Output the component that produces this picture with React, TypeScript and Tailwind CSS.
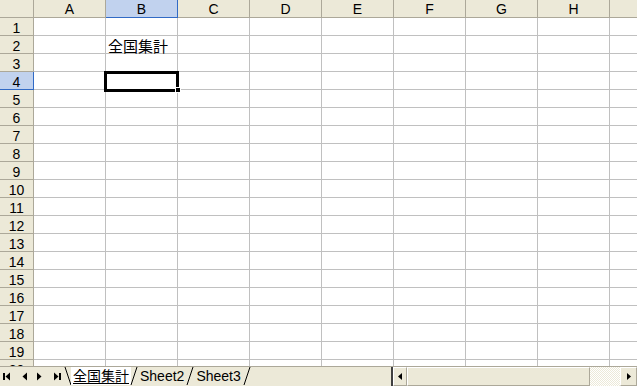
import React from "react";

const cols = ["A", "B", "C", "D", "E", "F", "G", "H", "I"];
const rows = Array.from({ length: 20 }, (_, i) => i + 1);

const font = { fontFamily: '"Liberation Sans", "Noto Sans CJK JP", sans-serif' };

const Tri = ({ dir, bar }: { dir: "l" | "r"; bar?: boolean }) => (
  <svg width="9" height="9" viewBox="0 0 9 9" className="block shrink-0">
    {dir === "l" ? (
      <>
        {bar && <rect x="1" y="1" width="2" height="7" fill="#000" />}
        <polygon points="8,0.5 8,8.5 3.5,4.5" fill="#000" />
      </>
    ) : (
      <>
        <polygon points="1,0.5 1,8.5 5.5,4.5" fill="#000" />
        {bar && <rect x="6" y="1" width="2" height="7" fill="#000" />}
      </>
    )}
  </svg>
);

const Slant = ({ back }: { back?: boolean }) => (
  <svg width="8" height="18" viewBox="0 0 8 18" className="block shrink-0">
    {back ? (
      <line x1="1" y1="0" x2="7" y2="18" stroke="#000" strokeWidth="1" />
    ) : (
      <line x1="7" y1="0" x2="1" y2="18" stroke="#000" strokeWidth="1" />
    )}
  </svg>
);

const App = () => {
  return (
    <div className="w-[637px] h-[386px] overflow-hidden bg-white flex flex-col" style={font}>
      <div className="relative h-[366px] overflow-hidden shrink-0">
        {/* header row */}
        <div className="flex h-[18px]">
          <div className="w-[34px] shrink-0 h-[18px] bg-[#ece9d8] border-r border-b border-[#aca899]" />
          {cols.map((c) => (
            <div
              key={c}
              className={
                c === "B"
                  ? "w-[72px] shrink-0 h-[18px] pt-[1px] bg-[#c1d2ee] border-r border-r-[#316ac5] border-b border-b-[#316ac5] flex items-center justify-center text-[14px] text-black"
                  : "w-[72px] shrink-0 h-[18px] pt-[1px] bg-[#ece9d8] border-r border-b border-[#aca899] flex items-center justify-center text-[14px] text-black"
              }
            >
              {c}
            </div>
          ))}
        </div>
        {rows.map((r) => (
          <div key={r} className="flex h-[18px]">
            <div
              className={
                r === 4
                  ? "w-[34px] shrink-0 h-[18px] pt-[3px] bg-[#c1d2ee] border-r border-r-[#316ac5] border-b border-b-[#316ac5] flex items-center justify-center text-[14px]"
                  : "w-[34px] shrink-0 h-[18px] pt-[3px] bg-[#ece9d8] border-r border-b border-[#aca899] flex items-center justify-center text-[14px]"
              }
            >
              {r}
            </div>
            {cols.map((c) => (
              <div
                key={c}
                className="w-[72px] shrink-0 h-[18px] pt-[3px] border-r border-b border-[#c0c0c0] flex items-center pl-[2px] text-[15px] leading-none whitespace-nowrap"
              >
                {r === 2 && c === "B" ? "全国集計" : ""}
              </div>
            ))}
          </div>
        ))}
        {/* active cell B4 */}
        <div className="absolute left-[104px] top-[71px] w-[75px] h-[21px] border-[3px] border-black" />
        <div className="absolute left-[175px] top-[87px] w-[6px] h-[6px] bg-black border border-white" />
      </div>

      {/* sheet tabs + horizontal scroll bar */}
      <div className="h-[20px] bg-[#ece9d8] flex items-start border-t border-[#aca899]">
        <div className="flex items-center h-[18px] w-[64px] shrink-0 pl-[2px] gap-[8px]">
          <Tri dir="l" bar />
          <Tri dir="l" />
          <Tri dir="r" />
          <Tri dir="r" bar />
        </div>
        <div className="flex items-start h-[19px] text-[14px] leading-none">
          <Slant back />
          <div className="h-[18px] bg-white flex items-center px-[2px] -mx-[1px]">
            <span className="underline underline-offset-2">全国集計</span>
          </div>
          <Slant />
          <div className="h-[18px] flex items-center px-[2px]">Sheet2</div>
          <Slant />
          <div className="h-[18px] flex items-center px-[2px]">Sheet3</div>
          <Slant />
        </div>
        <div className="flex-1" />
        <div className="flex h-[19px] items-stretch w-[254px] shrink-0">
          <div className="w-[10px] border-r-2 border-[#404040] bg-[#ece9d8]" />
          <div className="w-[14px] bg-[#ece9d8] border border-white border-r-[#aca899] border-b-[#aca899] flex items-center justify-center">
            <svg width="4" height="7" viewBox="0 0 4 7"><polygon points="4,0 4,7 0,3.5" fill="#000" /></svg>
          </div>
          <div className="w-[183px] bg-[#ece9d8] border border-white border-r-[#aca899] border-b-[#aca899]" />
          <div className="flex-1 bg-[repeating-conic-gradient(#ece9d8_0_25%,#ffffff_0_50%)] bg-[length:2px_2px]" />
          <div className="w-[17px] bg-[#ece9d8] border border-white border-r-[#aca899] border-b-[#aca899] flex items-center justify-center">
            <svg width="4" height="7" viewBox="0 0 4 7"><polygon points="0,0 0,7 4,3.5" fill="#000" /></svg>
          </div>
        </div>
      </div>
    </div>
  );
};

export default App;
